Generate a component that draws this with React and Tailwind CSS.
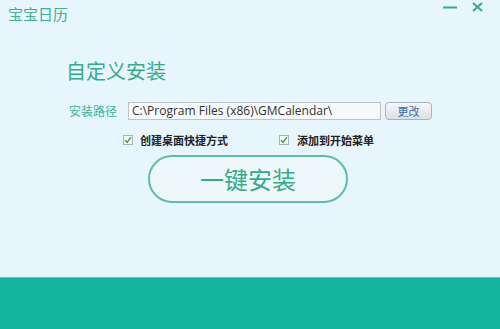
import React from 'react';

const cjk = '"Noto Sans CJK SC", "Noto Sans", sans-serif';

function Check() {
  return (
    <div className="w-[10px] h-[10px] border border-[#a9b4bb] bg-[#f7fbfc] flex items-center justify-center shrink-0">
      <svg width="8" height="8" viewBox="0 0 8 8">
        <path d="M1 4.2 L3.1 6.3 L7 1.3" stroke="#4aa531" strokeWidth="1.5" fill="none" />
      </svg>
    </div>
  );
}

export default function App() {
  return (
    <div className="w-[500px] h-[329px] bg-[#e7f5fc] flex flex-col overflow-hidden" style={{ fontFamily: cjk }}>
      {/* title bar */}
      <div className="flex items-start justify-between h-[40px]">
        <span className="ml-[8px] mt-[4px] text-[15px] leading-[20px] text-[#45ae94]">宝宝日历</span>
        <div className="flex items-center gap-[15px] mr-[17px] mt-[2px]">
          <svg width="14" height="10" viewBox="0 0 14 10">
            <path d="M0 5.5 H14" stroke="#3aa987" strokeWidth="2" />
          </svg>
          <svg width="11" height="10" viewBox="0 0 11 10">
            <path d="M1 1 L10 9 M10 1 L1 9" stroke="#3aa987" strokeWidth="2" />
          </svg>
        </div>
      </div>

      <h1 className="ml-[66px] mt-[20px] text-[20px] leading-[22px] text-[#36ab8a] font-normal">自定义安装</h1>

      {/* path row */}
      <div className="flex items-center mt-[20px] h-[18px]">
        <span className="ml-[69px] text-[12px] leading-[18px] text-[#3fb495] w-[59px]">安装路径</span>
        <div className="w-[253px] h-[18px] border border-[#b9c3c9] bg-[#f5f9fa] flex items-center px-[3px]">
          <span className="text-[12px] leading-[16px] text-[#333]" style={{ fontFamily: '"Open Sans", "Noto Sans", sans-serif' }}>
            C:\Program Files (x86)\GMCalendar\
          </span>
        </div>
        <button className="ml-[4px] w-[47px] h-[18px] rounded-[4px] border border-[#a8b4bd] bg-gradient-to-b from-[#f6f8fa] to-[#d9e0e6] text-[11px] leading-[16px] text-[#3d6da0] flex items-center justify-center">
          更改
        </button>
      </div>

      {/* checkbox row */}
      <div className="flex items-center mt-[14px] h-[12px]">
        <div className="ml-[123px] flex items-center gap-[7px] w-[155px]">
          <Check />
          <span className="text-[11px] leading-[12px] font-bold text-[#222]">创建桌面快捷方式</span>
        </div>
        <div className="ml-[1px] flex items-center gap-[8px]">
          <Check />
          <span className="text-[11px] leading-[12px] font-bold text-[#222]">添加到开始菜单</span>
        </div>
      </div>

      {/* install button */}
      <button className="ml-[148px] mt-[9px] w-[200px] h-[48px] rounded-full border-2 border-[#5cbfa6] bg-[#eef8fb] text-[24px] leading-[30px] text-[#36ab8a] flex items-center justify-center">
        一键安装
      </button>

      <div className="mt-auto h-[52px] bg-[#13b39c] border-t border-[#4fd2c0]" />
    </div>
  );
}
